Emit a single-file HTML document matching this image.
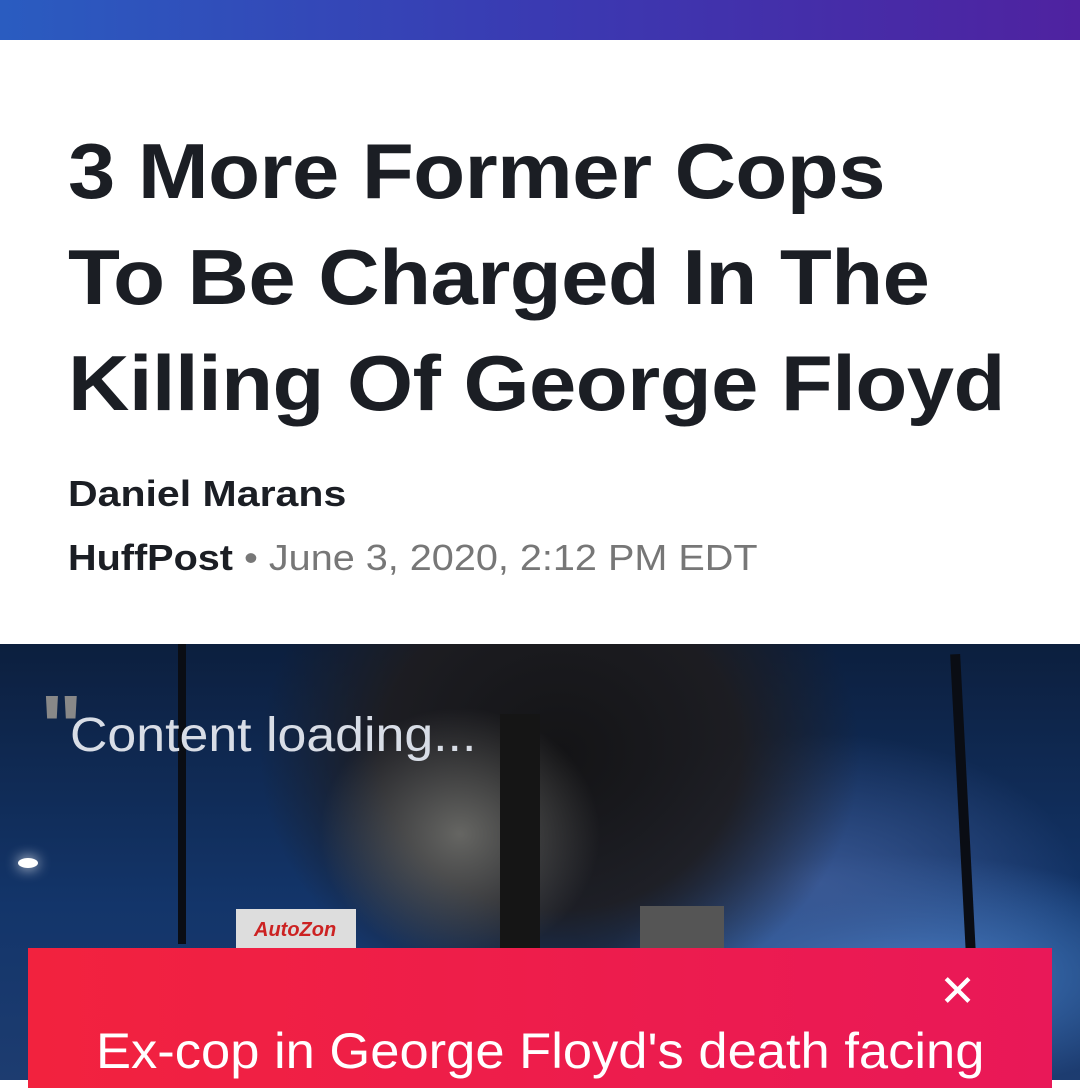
<!DOCTYPE html>
<html><head><meta charset="utf-8"><style>
body{margin:0;width:1080px;height:1080px;overflow:hidden;background:#fff;font-family:"Liberation Sans",Arial,sans-serif;position:relative}
.bar{position:absolute;top:0;left:0;width:1080px;height:40px;background:linear-gradient(90deg,#2a5cc0,#3a3ab2 50%,#4f22a0)}
h1{position:absolute;left:68px;top:118px;margin:0;font-size:78px;line-height:106px;font-weight:bold;color:#1b1e24;letter-spacing:-0.5px;transform:scaleX(1.09);transform-origin:0 0;white-space:nowrap}
.au{position:absolute;left:68px;top:473px;font-size:36px;font-weight:bold;color:#1b1e24;transform:scaleX(1.14);transform-origin:0 0}
.src{position:absolute;left:68px;top:537px;font-size:36px;color:#1b1e24;transform:scaleX(1.1);transform-origin:0 0;white-space:nowrap}
.src b{font-weight:bold}.src span{color:#777}
.img{position:absolute;left:0;top:644px;width:1080px;height:436px;overflow:hidden;
background:
radial-gradient(ellipse 200px 180px at 460px 190px,rgba(120,120,115,.8),transparent 70%),
radial-gradient(ellipse 300px 260px at 560px 110px,rgba(20,20,22,1),rgba(30,28,30,.9) 60%,transparent 100%),
radial-gradient(ellipse 260px 150px at 820px 240px,rgba(60,90,150,.9),transparent),
radial-gradient(ellipse 300px 120px at 900px 330px,#4a86d0,transparent),
linear-gradient(180deg,#0c1f3e,#13356a 60%,#1d3c70)}
.pole{position:absolute;background:#0a0d14}
.load{position:absolute;left:70px;top:64px;font-size:48px;color:#d8dde6;transform:scaleX(1.08);transform-origin:0 0;white-space:nowrap}
.q{position:absolute;left:40px;top:44px;width:42px;height:42px;color:#888;font-size:90px;font-weight:bold;line-height:80px}
.sign{position:absolute;left:236px;top:265px;width:120px;height:44px;background:#ddd}
.sign i{color:#c22;font-weight:bold;font-size:20px;position:absolute;left:18px;top:10px}
.red{position:absolute;left:28px;top:948px;width:1024px;height:140px;background:linear-gradient(90deg,#f2223e,#e91858)}
.x{position:absolute;right:76px;top:18px;font-size:44px;color:#fff}
.rt{position:absolute;left:68px;top:74px;font-size:50px;color:#fff;transform:scaleX(1.05);transform-origin:0 0;white-space:nowrap}
</style></head><body>
<div class="bar"></div>
<h1>3 More Former Cops<br>To Be Charged In The<br>Killing Of George Floyd</h1>
<div class="au">Daniel Marans</div>
<div class="src"><b>HuffPost</b> <span>• June 3, 2020, 2:12 PM EDT</span></div>
<div class="img">
<div class="pole" style="left:178px;top:0;width:8px;height:300px"></div>
<div class="pole" style="left:958px;top:10px;width:10px;height:300px;transform:rotate(-3deg)"></div>
<div class="pole" style="left:500px;top:70px;width:40px;height:240px;background:#151515"></div>
<div style="position:absolute;left:18px;top:214px;width:20px;height:10px;background:#fff;border-radius:50%;box-shadow:0 0 14px #fff"></div>
<div class="sign"><i>AutoZon</i></div>
<div style="position:absolute;left:640px;top:262px;width:84px;height:48px;background:#555"></div>
<div class="q">"</div>
<div class="load">Content loading...</div>
</div>
<div class="red"><div class="x">✕</div><div class="rt">Ex-cop in George Floyd's death facing</div></div>
</body></html>
